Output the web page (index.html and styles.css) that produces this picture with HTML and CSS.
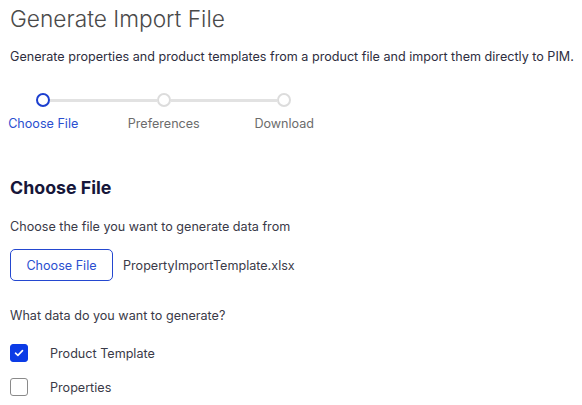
FILE: index.html
```html
<!DOCTYPE html>
<html>
<head>
<meta charset="utf-8">
<link rel="stylesheet" href="styles.css">
</head>
<body>
<div class="page">
  <h1 class="title">Generate Import File</h1>
  <p class="subtitle">Generate properties and product templates from a product file and import them directly to PIM.</p>

  <div class="stepper">
    <div class="step active"><span class="dot"></span><span class="label">Choose File</span></div>
    <div class="step"><span class="dot"></span><span class="label">Preferences</span></div>
    <div class="step last"><span class="dot"></span><span class="label">Download</span></div>
  </div>

  <h2 class="section">Choose File</h2>
  <p class="text">Choose the file you want to generate data from</p>
  <div class="file-row">
    <button class="btn">Choose File</button>
    <span class="filename">PropertyImportTemplate.xlsx</span>
  </div>

  <p class="text question">What data do you want to generate?</p>
  <div class="check-row first">
    <span class="box checked">
      <svg width="10" height="8" viewBox="0 0 10 8"><path d="M1.5 4.2 L3.9 6.4 L8.5 1.6" fill="none" stroke="#fff" stroke-width="1.6" stroke-linecap="round" stroke-linejoin="round"/></svg>
    </span>
    <span class="check-label">Product Template</span>
  </div>
  <div class="check-row">
    <span class="box"></span>
    <span class="check-label">Properties</span>
  </div>
</div>
</body>
</html>
```

FILE: styles.css
```css
* { box-sizing: border-box; }
html, body { margin: 0; padding: 0; background: #fff; }
body { font-family: Inter, "Noto Sans", sans-serif; color: #2f2f3f; }
.page { padding: 4px 10px 0 10px; }

.title {
  margin: 0;
  font-size: 22.7px;
  font-weight: 300;
  line-height: 30px;
  color: #4a4a4a;
}
.subtitle {
  margin: 14px 0 0 0;
  font-size: 12.6px;
  line-height: 18px;
  color: #2e2e40;
  white-space: nowrap;
}

.stepper {
  display: flex;
  margin: 27px 0 0 -27px;
}
.step {
  position: relative;
  width: 120.5px;
  display: flex;
  flex-direction: column;
  align-items: center;
}
.step .dot {
  position: relative;
  z-index: 1;
  width: 14px;
  height: 14px;
  border-radius: 50%;
  border: 2px solid #dcdcdc;
  background: #fff;
}
.step::after {
  content: "";
  position: absolute;
  top: 6px;
  left: calc(50% + 7px);
  width: calc(100% - 14px);
  height: 3px;
  background: #e2e2e2;
}
.step.last::after { display: none; }
.step.active .dot { border-color: #1c3fcf; }
.step .label {
  margin-top: 9px;
  font-size: 12.6px;
  line-height: 16px;
  color: #6c6c6c;
  white-space: nowrap;
}
.step.active .label { color: #2a4fd0; }

.section {
  margin: 45px 0 0 0;
  font-size: 17.8px;
  font-weight: 700;
  line-height: 22px;
  color: #16163a;
}
.text {
  margin: 19px 0 0 0;
  font-size: 12.6px;
  line-height: 18px;
  color: #3a3a48;
}
.file-row {
  display: flex;
  align-items: center;
  gap: 10px;
  margin-top: 13px;
}
.btn {
  width: 103px;
  height: 32px;
  padding: 0;
  border: 1px solid #2448d0;
  border-radius: 5px;
  background: #fff;
  color: #2a4fd0;
  font-family: inherit;
  font-size: 12.6px;
}
.filename {
  font-size: 12.6px;
  color: #3a3a48;
}
.question { margin-top: 26px; }

.check-row {
  display: flex;
  align-items: center;
  height: 18px;
  margin-top: 16px;
}
.check-row.first { margin-top: 19px; }
.box {
  width: 18px;
  height: 18px;
  border: 1px solid #8a8a8a;
  border-radius: 3px;
  display: flex;
  align-items: center;
  justify-content: center;
}
.box.checked {
  background: #0b3be6;
  border-color: #0b3be6;
}
.check-label {
  margin-left: 22px;
  font-size: 12.6px;
  color: #3a3a48;
}
```
